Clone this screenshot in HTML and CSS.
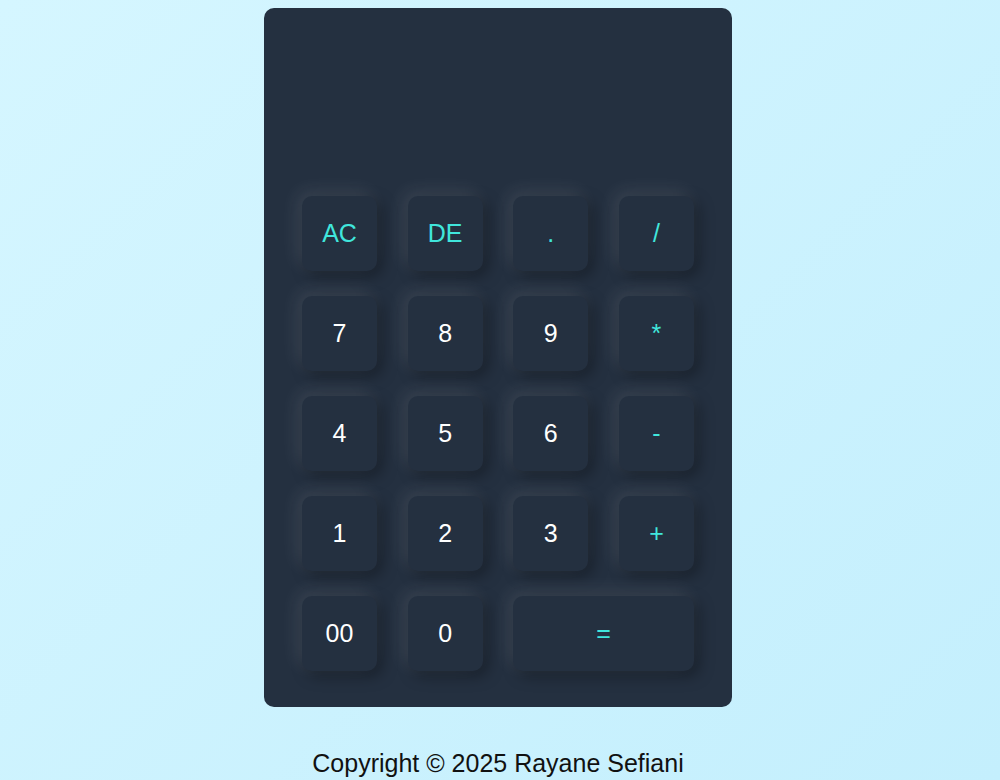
FILE: index.html
```html
<!DOCTYPE html>
<html lang="en">
<head>
<meta charset="utf-8">
<title>Calculator</title>
<link rel="stylesheet" href="styles.css">
</head>
<body>
<div class="calculator">
  <div class="display"></div>
  <div class="keys">
    <button class="key op">AC</button>
    <button class="key op">DE</button>
    <button class="key op">.</button>
    <button class="key op">/</button>
    <button class="key">7</button>
    <button class="key">8</button>
    <button class="key">9</button>
    <button class="key op">*</button>
    <button class="key">4</button>
    <button class="key">5</button>
    <button class="key">6</button>
    <button class="key op">-</button>
    <button class="key">1</button>
    <button class="key">2</button>
    <button class="key">3</button>
    <button class="key op">+</button>
    <button class="key">00</button>
    <button class="key">0</button>
    <button class="key op equal">=</button>
  </div>
</div>
<footer class="footer">Copyright © 2025 Rayane Sefiani</footer>
</body>
</html>
```
FILE: styles.css
```css
* { box-sizing: border-box; }
html, body { height: 100%; }
body {
  margin: 0;
  padding-right: 4px;
  font-family: "Liberation Sans", Arial, sans-serif;
  background: linear-gradient(135deg, #d5f6ff 0%, #c4effd 100%);
  display: flex;
  flex-direction: column;
  align-items: center;
  overflow: hidden;
}
.calculator {
  margin-top: 8px;
  width: 468px;
  height: 699px;
  background: #243040;
  border-radius: 10px;
  padding: 0 38px 35px;
  display: flex;
  flex-direction: column;
}
.display {
  height: 188px;
  flex: none;
}
.keys {
  display: grid;
  grid-template-columns: repeat(4, 75px);
  grid-auto-rows: 75px;
  justify-content: space-between;
  row-gap: 25px;
}
.key {
  border: none;
  outline: none;
  background: #243040;
  border-radius: 10px;
  color: #ffffff;
  font-family: "Liberation Sans", Arial, sans-serif;
  font-size: 25px;
  padding: 0;
  box-shadow: -5px -5px 18px rgba(255, 255, 255, 0.1), 5px 5px 15px rgba(0, 0, 0, 0.35);
}
.op { color: #40e6dc; }
.equal { grid-column: span 2; }
.footer {
  margin-top: 42px;
  font-size: 25px;
  color: #111;
}
```
